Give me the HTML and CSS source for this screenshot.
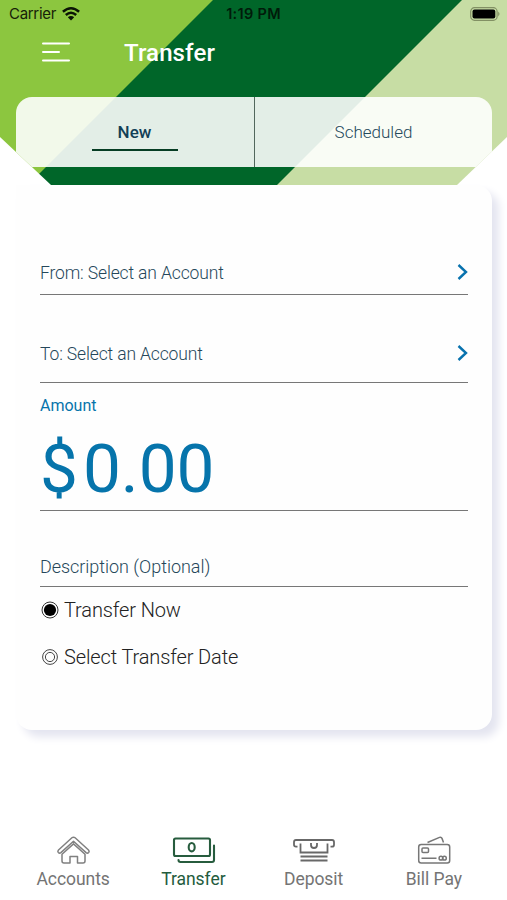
FILE: index.html
```html
<!DOCTYPE html>
<html lang="en">
<head>
<meta charset="utf-8">
<title>Transfer</title>
<link rel="stylesheet" href="styles.css">
</head>
<body>
<div class="app">
  <header class="header">
    <div class="status">
      <div class="carrier"><span>Carrier</span>
        <svg width="18" height="14" viewBox="0 0 18 14" fill="none" stroke="#0b1405" stroke-width="2.5"><path d="M.9 4.8Q9-2.2 17.1 4.8M3.8 8Q9 3.4 14.2 8"/><path d="M9 13.5 5.8 10.3Q9 7.7 12.2 10.3Z" fill="#0b1405" stroke="none"/></svg>
      </div>
      <div class="clock">1:19 PM</div>
      <svg class="battery" width="31" height="14" viewBox="0 0 31 14"><rect x=".7" y=".7" width="26.4" height="12.6" rx="3.8" fill="none" stroke="#829064" stroke-width="1.2"/><rect x="2.5" y="2.5" width="22.8" height="9" rx="2" fill="#000"/><path d="M28.2 4.6q2.6 2.4 0 4.8z" fill="#829064"/></svg>
    </div>
    <div class="titlebar">
      <svg width="28" height="22" viewBox="0 0 28 22" fill="none" stroke="#fff" stroke-width="2" stroke-linecap="round"><path d="M1 2.5h26M1 11h16M1 19.5h26"/></svg>
      <h1>Transfer</h1>
    </div>
    <nav class="tabs">
      <a class="tab active"><span>New</span></a>
      <a class="tab"><span>Scheduled</span></a>
    </nav>
  </header>
  <main class="card">
    <div class="field from"><span>From: Select an Account</span><svg width="12" height="18" viewBox="0 0 12 18" fill="none" stroke="#0872ae" stroke-width="2.4"><path d="m2.5 2 7.5 7-7.5 7"/></svg></div>
    <div class="field to"><span>To: Select an Account</span><svg width="12" height="18" viewBox="0 0 12 18" fill="none" stroke="#0872ae" stroke-width="2.4"><path d="m2.5 2 7.5 7-7.5 7"/></svg></div>
    <div class="amount">
      <label>Amount</label>
      <div class="value"><span>$</span><span>0.00</span></div>
    </div>
    <div class="field description"><span>Description (Optional)</span></div>
    <div class="option"><svg width="20" height="20" viewBox="0 0 20 20"><circle cx="10" cy="10" r="8" fill="none" stroke="#333"/><circle cx="10" cy="10" r="6.1"/></svg><span>Transfer Now</span></div>
    <div class="option"><svg width="20" height="20" viewBox="0 0 20 20" fill="none" stroke="#444"><circle cx="10" cy="10" r="7.4"/><circle cx="10" cy="10" r="4.6"/></svg><span>Select Transfer Date</span></div>
  </main>
  <footer class="bottom">
    <a class="item"><svg width="36" height="30" viewBox="0 0 36 30" fill="none" stroke="#808080" stroke-width="1.5" stroke-linejoin="round"><path d="M18.500 2.200q.9 0 1.600.6L33.500 15q1.200 1.300.2 2.500-1.200 1.200-2.600.1L18.500 6.200 5.900 17.600q-1.400 1.100-2.600-.1-1-1.200.2-2.500L16.900 2.800q.7-.6 1.600-.6Z"/><path d="M7 19.200V26q0 2 2 2h6v-6.500h7.500V28H28q2 0 2-2v-6.800L18.500 8.900Z"/></svg><span>Accounts</span></a>
    <a class="item selected"><svg width="44" height="30" viewBox="0 0 44 30" fill="none" stroke="#275c3e" stroke-width="2.1" stroke-linecap="round"><rect x="3" y="3.500" width="36" height="17.500" rx="1.5"/><ellipse cx="20.700" cy="12.200" rx="3" ry="4.200"/><path d="M43 10.500V25q0 2-2 2H9.500q-2 0-2-2"/></svg><span>Transfer</span></a>
    <a class="item"><svg width="44" height="30" viewBox="0 0 44 30" fill="none" stroke="#686868" stroke-width="1.8"><path d="M5.500 11.700H4q-2 0-2-2V7q0-2 2-2h36q2 0 2 2v2.700q0 2-2 2h-1.500M8.500 8.500v9h27v-9M19 8v2q0 3 3 3t3-3V8"/><path d="M8.500 21.500h27M8.500 25.500h27" stroke-width="2.2"/></svg><span>Deposit</span></a>
    <a class="item"><svg width="36" height="30" viewBox="0 0 36 30" fill="none" stroke="#777" stroke-width="1.5"><rect x="2.700" y="9.500" width="31" height="18.500" rx="2.5"/><rect x="6" y="13" width="6.500" height="4.500" rx="1"/><path d="M5.500 23.200h15M11.500 7.500 23.500 2.400q1.800-.6 2.500 1l1.500 4.100"/><circle cx="25" cy="23.200" r="1.900"/><circle cx="28.400" cy="23.200" r="1.900"/></svg><span>Bill Pay</span></a>
  </footer>
</div>
</body>
</html>
```
FILE: styles.css
```css
* { box-sizing: border-box; }
body { margin: 0; background: #fff; font-family: Roboto, sans-serif; }
svg { display: block; flex: none; overflow: visible; }
.app { width: 507px; height: 900px; display: flex; flex-direction: column; overflow: hidden; }
.header {
  height: 185px;
  flex: none;
  display: flex;
  flex-direction: column;
  background: linear-gradient(135deg, #8cc63f 150.2px, #006629 151px, #006629 326.3px, #c7dda4 327.1px);
  clip-path: polygon(0 0, 100% 0, 100% 137px, 457px 100%, 51px 100%, 0 137px);
}
.status {
  height: 28px;
  display: grid;
  grid-template-columns: 1fr auto 1fr;
  align-items: center;
  padding: 0 6px 1px 9px;
  font: 15px Inter, sans-serif;
  color: #172108;
}
.carrier { display: flex; align-items: center; gap: 6px; letter-spacing: -.3px; }
.clock { margin-right: 3px; font-weight: 600; font-size: 14.5px; letter-spacing: .3px; color: #001b0a; }
.battery { justify-self: end; }
.titlebar { height: 69px; display: flex; align-items: center; padding: 0 0 21px 42px; gap: 54px; }
.titlebar h1 { margin: 2px 0 0; font-size: 24px; line-height: 28px; letter-spacing: .12px; font-weight: 500; color: #fff; }
.tabs {
  height: 70px;
  margin: 0 15px 0 16px;
  display: grid;
  grid-template-columns: 239px 1fr;
  border-radius: 16px 16px 0 0;
  background: rgba(255, 255, 255, .89);
  overflow: hidden;
}
.tab { display: flex; justify-content: center; padding-top: 25px; font-size: 17px; line-height: 21px; font-weight: 300; color: #24495c; }
.tab.active { border-right: 1px solid #52675d; padding-right: 1px; font-weight: 500; color: #123f56; }
.active span { width: 86px; height: 29px; text-align: center; border-bottom: 2px solid #063d24; }
.card {
  flex: none;
  height: 545px;
  margin: 0 15px 0 16px;
  padding: 72px 24px 0;
  border-radius: 0 16px 16px 16px;
  background: #fefefe;
  box-shadow: 7px 7px 9px #e4e5f0;
}
.field {
  display: flex;
  justify-content: space-between;
  border-bottom: 1px solid #777;
  font-size: 18px;
  line-height: 22px;
  font-weight: 300;
  color: #25475a;
}
.from, .to { font-size: 17.5px; letter-spacing: -.14px; }
.from { height: 38px; padding-top: 5px; }
.to { height: 88px; padding-top: 48px; }
.field svg { margin-top: 1px; }
.amount { height: 128px; padding-top: 13px; border-bottom: 1px solid #777; color: #0674ab; }
.amount label { display: block; font-size: 16px; line-height: 20px; }
.value { display: flex; gap: 5px; font-size: 67.5px; line-height: 80px; padding-top: 13px; }
.description { height: 76px; padding-top: 45px; }
.description span { letter-spacing: -.04px; }
.option { display: flex; align-items: center; height: 47px; gap: 4px; font-size: 20px; letter-spacing: -.12px; font-weight: 300; color: #222; }
.description + .option { margin-top: -1px; }
.bottom { margin: 103px 13px 0; display: grid; grid-template-columns: repeat(4, 1fr); }
.item { display: flex; flex-direction: column; align-items: center; gap: 2px; padding-top: 2px; font-size: 17.5px; letter-spacing: -.05px; line-height: 24px; color: #747474; }
.selected { color: #245c3d; }
```
